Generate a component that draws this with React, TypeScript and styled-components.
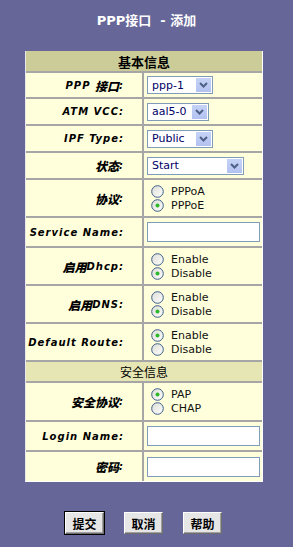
import React from "react";
import styled, { createGlobalStyle } from "styled-components";

const GlobalStyle = createGlobalStyle`
    html, body {
        margin: 0;
        padding: 0;
        background: #666699;
    }
    body {
        font-family: "DejaVu Sans", Verdana, "Noto Sans CJK SC", sans-serif;
        font-size: 11px;
    }
`;

const Page = styled.div`
    width: 293px;
    height: 547px;
    background: #666699;
    overflow: hidden;
`;

const Title = styled.div`
    height: 36px;
    padding-top: 10px;
    box-sizing: border-box;
    text-align: center;
    color: #ffffff;
    font-weight: bold;
    font-size: 13px;
    white-space: pre;
    font-family: "DejaVu Sans", "Noto Sans CJK SC", sans-serif;
`;

// 2px gaps show the gray grid lines
const Table = styled.div`
    margin: 15px 0 0 25px;
    width: 238px;
    box-sizing: border-box;
    display: grid;
    grid-template-columns: 116px 118px;
    column-gap: 2px;
    row-gap: 2px;
    background: #a6a6a6;
    border-left: 1px solid #e8e8e8;
    border-right: 1px solid #ffffff;
    border-bottom: 1px solid #ffffff;
`;

const Section = styled.div<{ $h: number; $main?: boolean }>`
    grid-column: 1 / 3;
    height: ${(p) => p.$h}px;
    display: flex;
    align-items: center;
    justify-content: center;
    background: ${(p) => (p.$main ? "#cccc99" : "#e6e6b4")};
    font-family: "Noto Sans CJK SC", sans-serif;
    font-weight: ${(p) => (p.$main ? "bold" : "normal")};
    font-size: ${(p) => (p.$main ? 13 : 12)}px;
    color: #000;
`;

const Label = styled.div<{ $h: number }>`
    height: ${(p) => p.$h}px;
    background: #ffffdc;
    display: flex;
    align-items: center;
    justify-content: flex-end;
    padding-right: 18px;
    font-weight: bold;
    font-style: italic;
    font-size: 10px;
    letter-spacing: 1px;
    color: #000;
    white-space: pre;
    font-family: "DejaVu Sans", "Noto Sans CJK SC", sans-serif;
`;

const Cjk = styled.span`
    font-family: "Noto Sans CJK SC", sans-serif;
    font-size: 12px;
    font-weight: 900;
    letter-spacing: 0;
`;

const Field = styled.div<{ $h: number }>`
    height: ${(p) => p.$h}px;
    background: #ffffdc;
    display: flex;
    flex-direction: column;
    justify-content: center;
    padding-left: 3px;
`;

const SelectBox = styled.div<{ $w: number }>`
    width: ${(p) => p.$w}px;
    height: 18px;
    box-sizing: border-box;
    border: 1px solid #7f9db9;
    background: #fff;
    display: flex;
    align-items: center;
    justify-content: space-between;
    padding: 1px;
    color: #000066;
    font-size: 11px;
`;

const SelectText = styled.span`
    padding-left: 3px;
`;

const ArrowBtn = styled.span`
    width: 15px;
    height: 14px;
    background: linear-gradient(#c6d3f7, #b2c2f0);
    display: flex;
    align-items: center;
    justify-content: center;
`;

const TextBox = styled.div`
    width: 113px;
    height: 20px;
    box-sizing: border-box;
    border: 1px solid #7f9db9;
    background: #fff;
`;

const RadioRow = styled.div`
    display: flex;
    align-items: center;
    height: 14px;
    padding-left: 4px;
    font-size: 11px;
    color: #111;
`;

const RadioText = styled.span`
    margin-left: 7px;
`;

const ButtonBar = styled.div`
    display: flex;
    justify-content: flex-start;
    gap: 20px;
    margin: 30px 0 0 65px;
`;

const Btn = styled.button<{ $def?: boolean }>`
    width: 39px;
    height: 22px;
    padding: 0;
    box-sizing: border-box;
    background: #e6e6e6;
    font-family: "Noto Sans CJK SC", sans-serif;
    font-weight: bold;
    font-size: 12px;
    color: #000;
    border-style: solid;
    border-width: 1px;
    border-color: #ffffff #6e6e6e #6e6e6e #ffffff;
    box-shadow: ${(p) =>
        p.$def ? "0 0 0 1px #000, inset -1px -1px 0 #a0a0a0" : "inset -1px -1px 0 #a0a0a0"};
`;

const Arrow = () => (
    <ArrowBtn>
        <svg width="9" height="6" viewBox="0 0 9 6">
            <path d="M1 1 L4.5 4.5 L8 1" fill="none" stroke="#4d6185" strokeWidth="2" />
        </svg>
    </ArrowBtn>
);

const Select = ({ value, w }: { value: string; w: number }) => (
    <SelectBox $w={w}>
        <SelectText>{value}</SelectText>
        <Arrow />
    </SelectBox>
);

const Radio = ({ on, text }: { on?: boolean; text: string }) => (
    <RadioRow>
        <svg width="13" height="13" viewBox="0 0 13 13">
            <defs>
                <linearGradient id="rg" x1="0" y1="0" x2="1" y2="1">
                    <stop offset="0" stopColor="#dcdcd6" />
                    <stop offset="1" stopColor="#ffffff" />
                </linearGradient>
            </defs>
            <circle cx="6.5" cy="6.5" r="5.8" fill="url(#rg)" stroke="#3c5d87" strokeWidth="1" />
            {on && <circle cx="6.5" cy="6.5" r="2" fill="#2db82d" />}
        </svg>
        <RadioText>{text}</RadioText>
    </RadioRow>
);

export default function App() {
    return (
        <Page>
            <GlobalStyle />
            <Title>{"PPP接口  - 添加"}</Title>
            <Table>
                <Section $h={20} $main>基本信息</Section>

                <Label $h={24}>
                    PPP <Cjk>接口</Cjk>:
                </Label>
                <Field $h={24}>
                    <Select value="ppp-1" w={66} />
                </Field>

                <Label $h={25}>ATM VCC:</Label>
                <Field $h={25}>
                    <Select value="aal5-0" w={62} />
                </Field>

                <Label $h={25}>IPF Type:</Label>
                <Field $h={25}>
                    <Select value="Public" w={66} />
                </Field>

                <Label $h={25}>
                    <Cjk>状态</Cjk>:
                </Label>
                <Field $h={25}>
                    <Select value="Start" w={97} />
                </Field>

                <Label $h={36}>
                    <Cjk>协议</Cjk>:
                </Label>
                <Field $h={36}>
                    <Radio text="PPPoA" />
                    <Radio text="PPPoE" on />
                </Field>

                <Label $h={28}>Service Name:</Label>
                <Field $h={28}>
                    <TextBox />
                </Field>

                <Label $h={36}>
                    <Cjk>启用</Cjk>Dhcp:
                </Label>
                <Field $h={36}>
                    <Radio text="Enable" />
                    <Radio text="Disable" on />
                </Field>

                <Label $h={36}>
                    <Cjk>启用</Cjk>DNS:
                </Label>
                <Field $h={36}>
                    <Radio text="Enable" />
                    <Radio text="Disable" on />
                </Field>

                <Label $h={36}>Default Route:</Label>
                <Field $h={36}>
                    <Radio text="Enable" on />
                    <Radio text="Disable" />
                </Field>

                <Section $h={19}>安全信息</Section>

                <Label $h={37}>
                    <Cjk>安全协议</Cjk>:
                </Label>
                <Field $h={37}>
                    <Radio text="PAP" on />
                    <Radio text="CHAP" />
                </Field>

                <Label $h={28}>Login Name:</Label>
                <Field $h={28}>
                    <TextBox />
                </Field>

                <Label $h={29}>
                    <Cjk>密码</Cjk>:
                </Label>
                <Field $h={29}>
                    <TextBox />
                </Field>
            </Table>
            <ButtonBar>
                <Btn $def>提交</Btn>
                <Btn>取消</Btn>
                <Btn>帮助</Btn>
            </ButtonBar>
        </Page>
    );
}
